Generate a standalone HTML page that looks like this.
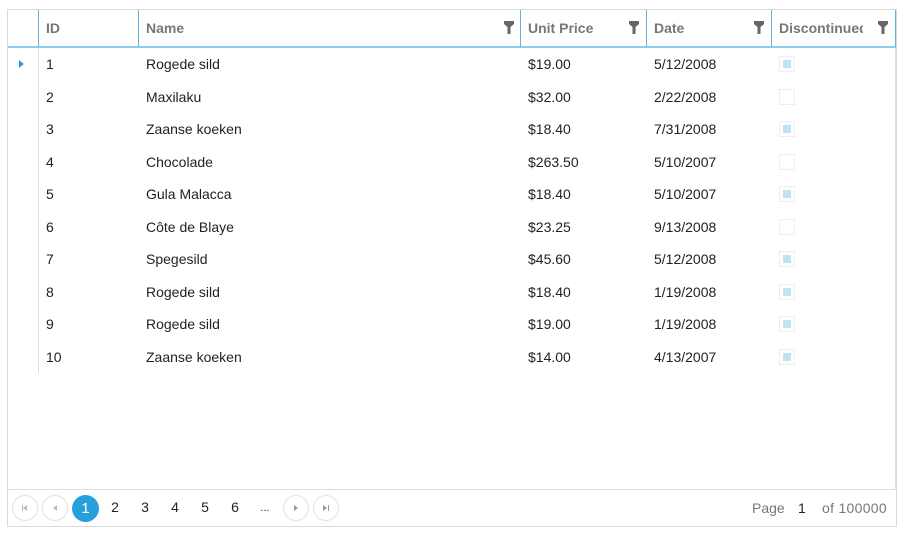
<!DOCTYPE html>
<html><head><style>
*{margin:0;padding:0;box-sizing:border-box}
body{width:906px;height:539px;background:#fff;font-family:"Liberation Sans",sans-serif;font-size:14px;color:#222;position:relative;overflow:hidden}
.a{position:absolute}
.h{position:absolute;top:10px;height:37px;line-height:37px;font-weight:bold;color:#777;font-size:14px}
.vl{position:absolute;top:10px;height:37px;width:1px;background:#5fb6e6}
.f{position:absolute;top:21px;width:10px;height:13px}
.c{position:absolute;font-size:14px;color:#222}
.cb{position:absolute;left:779px;width:16px;height:16px;border:1px solid #eee;background:#fff}
.cb i{position:absolute;left:3px;top:3px;width:8px;height:8px;background:#bde3f5}
.pc{position:absolute;top:495px;width:26px;height:26px;border:1px solid #e2e2e2;border-radius:50%}
.pn{position:absolute;top:499px;font-size:14px;width:20px;text-align:center}
</style></head><body>
<div class="a" style="left:7px;top:9px;width:890px;height:518px;border:1px solid #d9d9d9"></div>
<div class="a" style="left:8px;top:46px;width:888px;height:2px;background:#8fcbec"></div>
<div class="vl" style="left:38px"></div>
<div class="vl" style="left:138px"></div>
<div class="vl" style="left:520px"></div>
<div class="vl" style="left:646px"></div>
<div class="vl" style="left:771px"></div>
<div class="vl" style="left:895px"></div>
<div class="a" style="left:895px;top:48px;width:1px;height:442px;background:#e0e0e0"></div>
<div class="a" style="left:38px;top:48px;width:1px;height:325px;background:#ddd"></div>
<div class="h" style="left:46px">ID</div>
<div class="h" style="left:146px">Name</div>
<div class="h" style="left:528px">Unit Price</div>
<div class="h" style="left:654px">Date</div>
<div class="h" style="left:779px;width:84px;overflow:hidden;white-space:nowrap">Discontinued</div>
<svg class="f" style="left:504px" viewBox="0 0 10 13"><path d="M0 0H10V3L6.5 6V13H3.5V6L0 3Z" fill="#666"/></svg>
<svg class="f" style="left:629px" viewBox="0 0 10 13"><path d="M0 0H10V3L6.5 6V13H3.5V6L0 3Z" fill="#666"/></svg>
<svg class="f" style="left:754px" viewBox="0 0 10 13"><path d="M0 0H10V3L6.5 6V13H3.5V6L0 3Z" fill="#666"/></svg>
<svg class="f" style="left:878px" viewBox="0 0 10 13"><path d="M0 0H10V3L6.5 6V13H3.5V6L0 3Z" fill="#666"/></svg>
<svg class="a" style="left:19px;top:60px" width="6" height="8"><path d="M0 0L5 4L0 8Z" fill="#26a0da"/></svg>
<div id="rows"></div>
<script>
var d=[[1,"Rogede sild","$19.00","5/12/2008",1],[2,"Maxilaku","$32.00","2/22/2008",0],[3,"Zaanse koeken","$18.40","7/31/2008",1],[4,"Chocolade","$263.50","5/10/2007",0],[5,"Gula Malacca","$18.40","5/10/2007",1],[6,"Côte de Blaye","$23.25","9/13/2008",0],[7,"Spegesild","$45.60","5/12/2008",1],[8,"Rogede sild","$18.40","1/19/2008",1],[9,"Rogede sild","$19.00","1/19/2008",1],[10,"Zaanse koeken","$14.00","4/13/2007",1]];
var h="";d.forEach(function(r,i){var y=56+i*32.55;
h+='<div class="c" style="left:46px;top:'+y+'px">'+r[0]+'</div><div class="c" style="left:146px;top:'+y+'px">'+r[1]+'</div><div class="c" style="left:528px;top:'+y+'px">'+r[2]+'</div><div class="c" style="left:654px;top:'+y+'px">'+r[3]+'</div><div class="cb" style="top:'+y+'px">'+(r[4]?'<i></i>':'')+'</div>';});
document.getElementById("rows").innerHTML=h;
</script>
<div class="a" style="left:8px;top:489px;width:888px;height:1px;background:#ddd"></div>
<div class="pc" style="left:12px"></div>
<svg class="a" style="left:22px;top:505px" width="6" height="6"><path d="M0 0H1V6H0ZM5 0L1 3L5 6Z" fill="#bbb"/></svg>
<div class="pc" style="left:42px"></div>
<svg class="a" style="left:53px;top:505px" width="5" height="6"><path d="M4 0L0 3L4 6Z" fill="#bbb"/></svg>
<div class="a" style="left:72px;top:495px;width:27px;height:27px;border-radius:50%;background:#26a0da;color:#fff;text-align:center;line-height:27px;font-size:15px">1</div>
<div class="pn" style="left:105px">2</div><div class="pn" style="left:135px">3</div><div class="pn" style="left:165px">4</div><div class="pn" style="left:195px">5</div><div class="pn" style="left:225px">6</div>
<div class="pn" style="left:255px;font-size:11px;top:502px">...</div>
<div class="pc" style="left:283px"></div>
<svg class="a" style="left:294px;top:505px" width="5" height="6"><path d="M0 0L4 3L0 6Z" fill="#999"/></svg>
<div class="pc" style="left:313px"></div>
<svg class="a" style="left:323px;top:505px" width="6" height="6"><path d="M0 0L4 3L0 6ZM5 0H6V6H5Z" fill="#999"/></svg>
<div class="a" style="left:752px;top:500px;color:#777;font-size:14px">Page</div>
<div class="a" style="left:798px;top:500px;color:#222;font-size:14px">1</div>
<div class="a" style="left:822px;top:500px;color:#777;font-size:14px;letter-spacing:0.3px">of 100000</div>
</body></html>
